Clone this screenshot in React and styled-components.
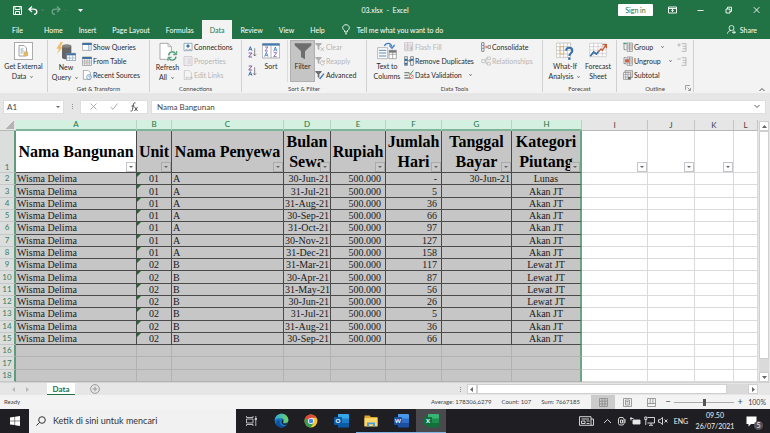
import { useState } from 'react';
import styled, { createGlobalStyle, css } from 'styled-components';

const GlobalStyle = createGlobalStyle`
  * {
    box-sizing: border-box;
  }

  html, body, #root {
    height: 100%;
    margin: 0;
  }

  body {
    font-family: Lato, "Open Sans", sans-serif;
    font-size: 7px;
    line-height: 10px;
    color: #2b2b2b;
    overflow: hidden;
  }

  button, input {
    font: inherit;
    color: inherit;
    margin: 0;
    padding: 0;
    border: 0;
    background: none;
  }

  svg {
    display: block;
    flex: none;
  }
`;

const Window = styled.div`
  display: flex;
  flex-direction: column;
  height: 100vh;
  background: #e6e6e6;
`;

/* ---------- title bar ---------- */

const TitleBar = styled.header`
  display: grid;
  grid-template-columns: 1fr auto 1fr;
  align-items: center;
  flex: none;
  height: 20px;
  background: #217346;
  color: #fff;
`;

const QuickAccess = styled.div`
  display: flex;
  align-items: center;
  gap: 5px;
  padding-left: 11px;
`;

const IconButton = styled.button`
  display: flex;
  align-items: center;
  justify-content: center;
  width: ${props => props.$width || 12}px;
  height: 12px;
  opacity: ${props => (props.$dim ? 0.35 : 1)};
`;

const DocTitle = styled.h1`
  margin: 0;
  font-size: 7px;
  font-weight: 400;
  white-space: pre;
`;

const WindowControls = styled.div`
  display: flex;
  align-items: center;
  justify-content: flex-end;
`;

const SignIn = styled.button`
  width: 35px;
  height: 12px;
  margin-right: 5px;
  border-radius: 1px;
  background: #fff;
  color: #217346;
`;

/* ---------- tabs ---------- */

const TabRow = styled.nav`
  display: flex;
  align-items: stretch;
  flex: none;
  height: 19px;
  padding: 0 13px 0 4px;
  background: #217346;
  color: #fff;
`;

const Tab = styled.button`
  padding: 0 8px;
  white-space: nowrap;
  color: ${props => (props.$active ? '#217346' : '#fff')};
  background: ${props => (props.$active ? '#f3f3f3' : 'transparent')};

  &:first-child {
    margin-right: 5px;
  }
`;

const TellMe = styled.button`
  display: flex;
  align-items: center;
  gap: 7px;
  margin-left: 9px;
  white-space: nowrap;
`;

const Share = styled.button`
  display: flex;
  align-items: center;
  gap: 4px;
  margin-left: auto;
`;

/* ---------- ribbon ---------- */

const Ribbon = styled.section`
  position: relative;
  display: flex;
  flex: none;
  height: 54px;
  padding-top: 1px;
  background: #f3f3f3;
`;

const Group = styled.div`
  position: relative;
  display: flex;
  flex-direction: column;
  width: ${props => props.$width}px;
  margin-bottom: 1px;
  border-right: 1px solid #d0d0d0;
`;

const GroupBody = styled.div`
  display: flex;
  flex: 1;
  padding-left: ${props => props.$pad || 0}px;
`;

const GroupLabel = styled.div`
  height: 7px;
  font-size: 6px;
  line-height: 7px;
  text-align: center;
  color: #444;
`;

const BigButton = styled.button`
  display: flex;
  flex-direction: column;
  align-items: center;
  gap: 1px;
  width: ${props => props.$width || 34}px;
  height: 42px;
  padding-top: 2px;
  white-space: nowrap;
  background: ${props => (props.$pressed ? '#c5c5c5' : 'none')};
  ${props => props.$pressed && css`box-shadow: inset 0 0 0 1px #b0b0b0;`}
`;

const Framed = styled.span`
  display: flex;
  align-items: center;
  justify-content: center;
  width: 19px;
  height: 18px;
  border: 1px solid #ababab;
  background: #fff;
`;

const SmallColumn = styled.div`
  display: flex;
  flex-direction: column;
  width: ${props => props.$width || 'auto'};
`;

const SmallButton = styled.button`
  display: flex;
  align-items: center;
  gap: 1px;
  height: 14px;
  white-space: nowrap;
  color: ${props => (props.$off ? '#b5b5b5' : '#2b2b2b')};

  > svg:first-child {
    opacity: ${props => (props.$off ? 0.5 : 1)};
  }
`;

const Caret = styled.span`
  display: inline-block;
  width: 3px;
  height: 3px;
  margin: 0 2px 1px ${props => props.$gap || 4}px;
  border-right: 1px solid #777;
  border-bottom: 1px solid #777;
  transform: rotate(45deg) scale(0.7);
`;

const InnerRule = styled.div`
  width: 1px;
  height: 42px;
  margin: 0 2px;
  background: #dcdcdc;
`;

const SortStack = styled.div`
  display: flex;
  flex-direction: column;
  gap: 7px;
  padding-top: 6px;
`;

const CornerButton = styled.button`
  position: absolute;
  right: ${props => props.$right}px;
  bottom: 1px;
`;

/* ---------- formula bar ---------- */

const FormulaBar = styled.div`
  display: flex;
  align-items: center;
  flex: none;
  height: 27px;
  padding: 0 4px 0 3px;
`;

const Field = styled.div`
  display: flex;
  align-items: center;
  justify-content: space-between;
  flex: ${props => (props.$grow ? 1 : 'none')};
  width: ${props => props.$width || 0}px;
  height: 14px;
  margin-left: ${props => (props.$grow ? 3 : 0)}px;
  padding: 0 ${props => props.$pad || 4}px;
  background: #fff;
  border: 1px solid #dedede;

  input {
    flex: 1;
    min-width: 0;
    height: 12px;
    outline: 0;
    font-size: 8px;
    color: #444;
  }
`;

const Dots = styled.div`
  display: flex;
  flex-direction: column;
  align-items: center;
  gap: 1px;
  width: ${props => props.$width || 16}px;

  &::before, &::after, i {
    content: "";
    width: 1px;
    height: 1px;
    background: #909090;
  }
`;

/* ---------- sheet ---------- */

const SheetArea = styled.main`
  display: flex;
  flex: 1;
  min-height: 0;
`;

const GridHolder = styled.div`
  flex: 1;
  min-width: 0;
  background: #fff;
`;

const Grid = styled.table`
  width: 100%;
  height: 100%;
  table-layout: fixed;
  border-collapse: separate;
  border-spacing: 0;
  font-family: "Liberation Serif", serif;
  font-size: 10px;
  line-height: 11px;
  color: #1a1a1a;

  td, th {
    padding: 0;
    white-space: nowrap;
    overflow: hidden;
  }
`;

const ColHead = styled.th`
  height: 11px;
  font-family: Lato, sans-serif;
  font-size: 8px;
  line-height: 9px;
  font-weight: 400;
  color: ${props => (props.$selected ? '#217346' : '#444')};
  background: ${props => (props.$selected ? '#d3f0e0' : '#e6e6e6')};
  border-right: 1px solid ${props => (props.$selected ? '#b4d6c3' : '#c4c4c4')};
  border-bottom: ${props => (props.$selected ? '2px solid #7fb498' : '1px solid #b8b8b8')};
`;

const Corner = styled.th`
  background: linear-gradient(135deg, transparent 50%, #b4b4b4 50%) right 2px bottom 1px / 9px 9px no-repeat #e6e6e6;
  border-bottom: 1px solid #b8b8b8;
`;

const RowHead = styled.th`
  font-family: Lato, sans-serif;
  font-size: 8px;
  line-height: 9px;
  font-weight: 400;
  vertical-align: ${props => (props.$tall ? 'bottom' : 'middle')};
  color: #3c7d5a;
  background: #dcdedd;
  border-right: 2px solid #5f9c7c;
  border-bottom: 1px solid #c4c8c6;
`;

const Cell = styled.td`
  position: relative;
  height: 12px;
  text-align: ${props => props.$align || 'left'};
  background: ${props => (props.$selected ? '#c6c6c6' : '#fff')};
  border-right: 1px solid ${props => (!props.$selected ? '#dadada' : props.$lined ? '#4a4a4a' : '#b2b2b2')};
  border-bottom: 1px solid ${props => (!props.$selected ? '#dadada' : props.$lined ? '#4a4a4a' : '#b2b2b2')};

  && {
    padding: 0 ${props => props.$right || 1}px 0 1px;
  }

  ${props => props.$edge && css`border-right: 2px solid #6ba587;`}

  ${props => props.$flag && css`
    &::before {
      content: "";
      position: absolute;
      top: 0;
      left: 0;
      border-top: 4px solid #1d6b25;
      border-right: 4px solid transparent;
    }
  `}
`;

const TitleCell = styled(Cell)`
  height: 40px;
  font-size: 16px;
  line-height: 20px;
  font-weight: 700;
  color: #000;
  background: ${props => (props.$first || !props.$selected ? '#fff' : '#c6c6c6')};

  && {
    padding: 0;
    white-space: pre;
  }
`;

const FilterButton = styled.button`
  position: absolute;
  right: 0;
  bottom: 0;
  display: flex;
  align-items: center;
  justify-content: center;
  width: 10px;
  height: 10px;
  border: 1px solid ${props => (props.$selected ? '#a9abad' : '#c3c7cc')};
  background: ${props => (props.$selected ? '#c9c9c9' : '#fcfcfd')};
`;

const Down = styled.span`
  border: 2px solid transparent;
  border-top-color: #666;
  border-bottom: 0;
`;

const ScrollColumn = styled.div`
  display: flex;
  flex-direction: column;
  align-items: center;
  width: 12px;
  padding-top: 1px;
`;

const ScrollEnd = styled.button`
  display: flex;
  align-items: center;
  justify-content: center;
  flex: none;
  width: 10px;
  height: 10px;
  background: #fff;
  border: 1px solid #cfcfcf;
`;

const VTrack = styled.div`
  flex: 1;
  width: 10px;
  padding-bottom: 13px;
  background: #dadada;

  div {
    height: 100%;
    background: #fff;
    border: 1px solid #cfcfcf;
  }
`;

const SheetTabs = styled.div`
  display: flex;
  align-items: center;
  flex: none;
  height: 13px;
  padding-right: 12px;
  border-top: 1px solid #d4d4d4;
`;

const TabArrows = styled.div`
  display: flex;
  gap: 9px;
  width: 47px;
  padding-left: 11px;
`;

const SheetTab = styled.button`
  align-self: stretch;
  width: 28px;
  font-size: 8px;
  font-weight: 700;
  color: #217346;
  background: #fff;
  border-bottom: 1px solid #217346;
`;

const HScroll = styled.div`
  display: flex;
  align-items: center;
  width: 40%;
  margin-left: auto;
`;

const HTrack = styled.div`
  flex: 1;
  height: 10px;
  padding-right: 21px;
  background: #dadada;

  div {
    height: 100%;
    background: #fff;
    border: 1px solid #cfcfcf;
  }
`;

/* ---------- status bar ---------- */

const StatusBar = styled.footer`
  display: flex;
  align-items: center;
  flex: none;
  height: 14px;
  padding: 0 4px;
  background: #f3f3f3;
  font-size: 6px;
  color: #444;
`;

const Totals = styled.div`
  display: flex;
  gap: 10px;
  margin: 0 11px 0 auto;
  white-space: nowrap;
`;

const ViewButton = styled.button`
  display: flex;
  align-items: center;
  justify-content: center;
  width: 24px;
  height: 14px;
  background: ${props => (props.$active ? '#cbcbcb' : 'none')};
`;

const Zoom = styled.label`
  display: flex;
  align-items: center;
  gap: 2px;
  margin-left: 1px;

  button {
    width: 8px;
    height: 12px;
    font-size: 9px;
  }
`;

const ZoomRange = styled.input`
  appearance: none;
  width: 60px;
  height: 8px;
  background: linear-gradient(#aaa, #aaa) center / 100% 1px no-repeat;

  &::-webkit-slider-thumb {
    appearance: none;
    width: 3px;
    height: 7px;
    background: #555;
  }
`;

const ZoomValue = styled.span`
  width: 20px;
  font-size: 7px;
  text-align: right;
`;

/* ---------- taskbar ---------- */

const Taskbar = styled.div`
  display: flex;
  align-items: stretch;
  flex: none;
  height: 24px;
  background: #1f1e22;
  color: #f2f2f2;
`;

const TaskButton = styled.button`
  display: flex;
  align-items: center;
  justify-content: center;
  width: ${props => props.$width || 30}px;
  background: ${props => (props.$active ? '#4a4a4e' : 'none')};
  border-bottom: 1px solid ${props => (props.$open ? '#7fb6e6' : 'transparent')};
`;

const SearchBox = styled.label`
  display: flex;
  align-items: center;
  gap: 7px;
  width: 207px;
  padding-left: 7px;
  background: #f1f1f1;

  input {
    flex: 1;
    min-width: 0;
    outline: 0;
    font-size: 9px;
  }

  input::placeholder {
    color: #333;
    opacity: 1;
  }
`;

const Tray = styled.div`
  display: flex;
  align-items: center;
  margin-left: auto;
  padding-right: 5px;
`;

const TrayButton = styled.button`
  display: flex;
  align-items: center;
  justify-content: center;
  width: ${props => props.$width || 14}px;
  height: 24px;
`;

const Clock = styled.time`
  width: 46px;
  font-size: 7px;
  line-height: 11px;
  text-align: center;
`;

const Notice = styled(TrayButton)`
  position: relative;

  span {
    position: absolute;
    right: 2px;
    bottom: 3px;
    width: 9px;
    height: 9px;
    border-radius: 50%;
    background: #55555a;
    line-height: 9px;
  }
`;

/* ---------- icons ---------- */

const SaveIcon = () => (
  <svg width="9" height="9" viewBox="0 0 9 9" fill="none" stroke="#fff">
    <path d="M.5.5h8v8h-8zM2 .5v3h5v-3M2.5 8.5v-3h4v3" />
  </svg>
);

const UndoIcon = ({ flip }) => (
  <svg width="10" height="9" viewBox="0 0 10 9" fill="none" stroke="#fff" strokeWidth="1.3">
    <path transform={flip ? 'translate(10 0) scale(-1 1)' : undefined} d="M4 .5 1 3.2 4 6M1 3.2h4.5c2.200 0 3.300 1.200 3.300 2.600S7.700 8.300 6 8.300" />
  </svg>
);

const BulbIcon = () => (
  <svg width="8" height="11" viewBox="0 0 8 11" fill="none" stroke="#fff" strokeWidth=".9">
    <path d="M2.700 8V6.700C1.500 6 .7 5 .7 3.800.7 2 2.200.7 4 .7s3.300 1.300 3.300 3.100c0 1.200-.8 2.200-2 2.900V8zM3 9.800h2" />
  </svg>
);

const ShareIcon = () => (
  <svg width="9" height="9" viewBox="0 0 9 9" fill="none" stroke="#fff" strokeWidth=".8">
    <circle cx="4.500" cy="3" r="2.500" />
    <path d="M.5 8.700C.8 6.600 2.200 5.500 4 5.500M5 7.300h4M7 5.300v3.700" />
  </svg>
);

const WinIcon = ({ kind }) => (
  <svg width="9" height="8" viewBox="0 0 9 8" fill="none" stroke="#fff" strokeWidth=".9">
    {kind === 'ribbon' && <path d="M.5 1h8v6h-8zM.5 2.500h8M4.500 6V3.500M3.200 4.700l1.300-1.200 1.300 1.200" />}
    {kind === 'min' && <path d="M1.500 4.500h6" />}
    {kind === 'restore' && <path d="M2 3h4v4H2zM3.500 3V1.200h4V5.500H6" />}
    {kind === 'close' && <path d="M1.800 1.200l5.600 5.600M7.400 1.200 1.800 6.800" />}
  </svg>
);

const ExternalIcon = () => (
  <svg width="11" height="12" viewBox="0 0 11 12">
    <path d="M1 .5h5l2.500 2.500v8H1z" fill="#fff" stroke="#8a8a8a" strokeWidth=".8" />
    <path d="M2.500 4h3M2.500 6h3M2.500 8h2" stroke="#6d8fb5" strokeWidth=".8" />
    <path d="M5.500 6.500h4.500v4.500H5.500z" fill="#e3b567" />
  </svg>
);

const QueryIcon = () => (
  <svg width="20" height="19" viewBox="0 0 60 57">
    <path d="M18 12v36c4 5 24 5 28 0V12z" fill="#666" />
    <ellipse cx="32" cy="12" rx="14" ry="5" fill="#858585" />
    <path d="M14 0 1 20h8L3 36l18-22h-8l8-14z" fill="#edbd6b" />
    <path d="M32 34h27v22H32z" fill="#fff" stroke="#5d7896" strokeWidth="2" />
    <path d="M32 34h27v6H32z" fill="#41729f" />
    <path d="M32 48h27M41 40v16M50 40v16" stroke="#8aa5bf" strokeWidth="2" />
  </svg>
);

const RefreshIcon = () => (
  <svg width="20" height="19" viewBox="0 0 60 57" fill="none">
    <path d="M6 4h24l10 10v38H6z" fill="#fff" stroke="#9a9a9a" strokeWidth="2.500" />
    <path d="M30 4v10h10" stroke="#9a9a9a" strokeWidth="2" />
    <circle cx="43" cy="42" r="15" fill="#f3f3f3" />
    <path d="M32 40c1-13 17-14 21-4M54 44c-1 12-17 14-21 4" stroke="#4b9a76" strokeWidth="4" />
    <path d="M56 27v11H45M30 57V46h11" stroke="#4b9a76" strokeWidth="3" />
  </svg>
);

const SheetIcon = ({ kind }) => (
  <svg width="10" height="10" viewBox="0 0 30 30" fill="none" strokeWidth="2">
    {kind === 'show' && (
      <>
        <path d="M1 3h28v22H1z" fill="#fff" stroke="#858585" />
        <path d="M1 3h28v6H1z" fill="#3f6f9f" />
        <path d="M20 9v16" stroke="#4b81b5" />
        <path d="M20 10h8v14h-8z" fill="#cfe0f0" />
      </>
    )}
    {kind === 'table' && (
      <>
        <path d="M1 3h28v25H1z" fill="#fff" stroke="#7a7a7a" />
        <path d="M1 3h28v6H1z" fill="#3f6f9f" />
        <path d="M1 15h28M1 21h28M8 9v19M15 9v19M22 9v19" stroke="#999" />
      </>
    )}
    {kind === 'recent' && (
      <>
        <path d="M4 1h14l7 7v20H4z" fill="#fff" stroke="#888" />
        <circle cx="21" cy="21" r="7" fill="#fff" stroke="#4b81b5" />
        <path d="M21 17v4h4" stroke="#4b81b5" />
      </>
    )}
    {kind === 'connections' && (
      <>
        <path d="M3 4h24v22H3z" fill="#fff" stroke="#6a89aa" />
        <path d="M15 7v10M10 12h10" stroke="#2c6db0" strokeWidth="4" />
        <path d="M8 22h6M17 22h7" stroke="#777" />
      </>
    )}
    {kind === 'props' && (
      <>
        <path d="M3 2h24v26H3z" fill="#f7f3f8" stroke="#8b7595" />
        <path d="M7 9h3M7 15h3M7 21h3M13 9h11M13 15h11M13 21h11" stroke="#806f8a" />
      </>
    )}
    {kind === 'links' && (
      <>
        <path d="M4 1h14l7 7v20H4z" fill="#f6f6f6" stroke="#888" />
        <path d="M11 23h6M19 23h8M11 20v6M27 20v6" stroke="#777" />
      </>
    )}
    {kind === 'flash' && (
      <>
        <path d="M2 2h24v24H2z" fill="#f4f0f4" stroke="#907c90" />
        <path d="M2 9h24M2 15h24M2 21h14M11 2v22" stroke="#907c90" />
        <path d="M22 13l-6 9h5l-3 7 9-10h-5l3-6z" fill="#997a85" />
      </>
    )}
    {kind === 'dupes' && (
      <>
        <path d="M2 2h8v26H2zM20 2h8v26h-8z" fill="#fff" stroke="#555" />
        <path d="M2 8h8v7H2zM20 8h8v6h-8zM2 20h8v6H2z" fill="#2f6ead" />
        <path d="M10 14h9M16 10l4 4-4 4" stroke="#444" />
      </>
    )}
    {kind === 'valid' && (
      <>
        <path d="M1 8h15M1 16h12M1 24h22" stroke="#888" strokeWidth="4" />
        <path d="M14 9l4 5L28 1" stroke="#3d9a6a" strokeWidth="3" />
        <circle cx="22" cy="20" r="6" fill="#fff" stroke="#d2533b" />
        <path d="M18 24l8-8" stroke="#d2533b" />
      </>
    )}
    {kind === 'consolidate' && (
      <>
        <path d="M2 2h7v26H2z" fill="#fff" stroke="#555" />
        <path d="M2 10h7M2 19h7" stroke="#2f6ead" />
        <path d="M10 15h9M15 11l4 4-4 4" stroke="#c7502e" />
        <path d="M21 11h8v8h-8z" fill="#fff" stroke="#555" />
      </>
    )}
    {kind === 'relations' && <path d="M2 11h10v9H2zM19 3h9v8h-9zM19 19h9v8h-9zM12 15h3V7h4M15 15v8h4" stroke="#777" />}
    {(kind === 'group' || kind === 'ungroup') && (
      <>
        <path d="M12 3h16v25H12zM12 9h16M12 15h16M12 21h16M20 3v25" fill="#fff" stroke="#777" />
        <path d="M9 5H3v18h6" stroke="#666" />
        {kind === 'group'
          ? <path d="M1 2h10v4H1z" fill="#4d9a76" />
          : <path d="M6 10h12v9H6z" fill="#d0624c" />}
      </>
    )}
    {kind === 'subtotal' && (
      <>
        <path d="M6 2h23v20H6z" fill="#ddd" stroke="#777" />
        <path d="M1 8h22v20H1z" fill="#fff" stroke="#777" />
        <path d="M1 14h22M1 21h22M8 8v20M15 8v20" stroke="#888" />
        <path d="M15 21h8v7h-8z" fill="#6d6d6d" />
      </>
    )}
  </svg>
);

// A over Z, or the other way round, with the arrow beside it
const SortIcon = ({ reverse }) => (
  <svg width="9" height="12" viewBox="0 0 27 36" fill="none" strokeWidth="3">
    <path transform={reverse ? 'translate(0 18)' : undefined} d="M2 14 7 2l5 12M4 10h6" stroke="#3f78b5" />
    <path transform={reverse ? 'translate(0 -18)' : undefined} d="M2 21h10L2 33h10" stroke="#8a5aa0" />
    <path d="M20 7v23M15.500 25l4.500 5 4.500-5" stroke="#555" strokeWidth="2" />
  </svg>
);

const SortBigIcon = () => (
  <svg width="18" height="18" viewBox="0 0 54 54" fill="none" strokeWidth="2.500">
    <path d="M1 6h52v42H1z" fill="#fff" stroke="#8c8c8c" strokeWidth="2" />
    <path d="M1 4h52v7H1z" fill="#4679ac" />
    <path d="M27 11v37" stroke="#8c8c8c" strokeWidth="2" />
    <path d="M9 15h9L9 27h9M35 32h9L35 44h9" stroke="#8a5aa0" />
    <path d="M8 44l5-13 5 13M10 40h6M35 28l5-13 5 13M37 24h6" stroke="#3f78b5" />
  </svg>
);

const FilterBigIcon = () => (
  <svg width="18" height="18" viewBox="0 0 54 54">
    <path d="M2 4h50v6L33 28v24l-12-7V28L2 10z" fill="#6e6e6e" />
  </svg>
);

const FilterSmallIcon = ({ kind }) => (
  <svg width="10" height="10" viewBox="0 0 30 30" fill="none" strokeWidth="2.500">
    <path d="M1 3h19v3l-7 7v12l-5-4v-8L1 6z" fill="#6e6e6e" />
    {kind === 'clear' && <path d="M17 16l10 11M27 16 17 27" stroke="#777" />}
    {kind === 'reapply' && <path d="M26 16c-6-5-13 1-9 8 3 5 11 3 11-3M28 12v6h-6" stroke="#777" />}
    {kind === 'advanced' && <path d="M14 27 27 11" stroke="#3b76b5" strokeWidth="4" />}
  </svg>
);

const ColumnsIcon = () => (
  <svg width="20" height="18" viewBox="0 0 60 54" fill="none" strokeWidth="2">
    <path d="M2 17h30v33H2z" fill="#fff" stroke="#999" />
    <path d="M6 25h22M6 33h22M6 42h22" stroke="#5a87b5" strokeWidth="3" />
    <path d="M36 25h22v25H36zM36 37h22M47 25v25" fill="#fff" stroke="#888" />
    <path d="M36 25h22v7H36z" fill="#777" />
    <path d="M22 12C27 1 41 1 45 14" stroke="#3f7ec0" strokeWidth="4" />
    <path d="M37 10l8 9 8-10" stroke="#3f7ec0" strokeWidth="4" />
  </svg>
);

const WhatIfIcon = () => (
  <svg width="18" height="18" viewBox="0 0 54 54" fill="none">
    <path d="M1 3h43v43H1zM1 14h43M1 25h43M1 36h43M12 3v43M23 3v43M34 3v43" fill="#fff" stroke="#b9b3ac" strokeWidth="2" />
    <path d="M12 14h11v22H12z" stroke="#e2a763" strokeWidth="2" />
    <path d="M30 26c1-12 19-12 19 0 0 8-9 8-9 16" stroke="#386fae" strokeWidth="6" />
    <circle cx="40" cy="50" r="4" fill="#386fae" />
  </svg>
);

const ForecastIcon = () => (
  <svg width="18" height="18" viewBox="0 0 54 54" fill="none">
    <path d="M2 4h50v40H2zM2 14h50M2 24h50M2 34h50M14 4v40M27 4v40M40 4v40" fill="#fff" stroke="#c3c3c3" strokeWidth="2" />
    <path d="M4 43 14 30l8 6 8-9" stroke="#3a6ea5" strokeWidth="5" />
    <path d="M29 29l7-8 4 4L51 9M41 8h11v11" stroke="#cf5a36" strokeWidth="4" />
  </svg>
);

const DetailIcon = ({ minus }) => (
  <svg width="10" height="9" viewBox="0 0 30 27" fill="none" stroke="#b0b0b0" strokeWidth="2.500">
    <path d={minus ? 'M1 6h10' : 'M1 6h10M6 1v10'} />
    <path d="M14 2h13v23H14M17 10h10M17 17h10" />
  </svg>
);

const ViewIcon = ({ kind }) => (
  <svg width="9" height="9" viewBox="0 0 9 9" fill="none" stroke="#888" strokeWidth=".8">
    <path d="M.5.5h8v8h-8z" />
    {kind === 'normal' && <path d="M.5 3.200h8M.5 5.900h8M3.200.5v8M5.900.5v8" />}
    {kind === 'layout' && <path d="M2.500 2h4v5h-4zM3.500 3.500h2M3.500 5h2" />}
    {kind === 'break' && <path d="M.5 5.500h8M3.200 .5v5M5.900.5v5" />}
  </svg>
);

const StartIcon = () => (
  <svg width="10" height="10" viewBox="0 0 10 10" fill="#fff">
    <path d="M0 1.400 4.600.8v3.900H0zM5.100.7 10 0v4.700H5.100zM0 5.200h4.600v3.900L0 8.500zM5.100 5.200H10v4.700l-4.900-.7z" />
  </svg>
);

const SearchIcon = () => (
  <svg width="10" height="10" viewBox="0 0 10 10" fill="none" stroke="#333">
    <circle cx="6" cy="4" r="3.300" />
    <path d="M3.600 6.400.4 9.600" />
  </svg>
);

const TaskViewIcon = () => (
  <svg width="11" height="10" viewBox="0 0 11 10" fill="none" stroke="#ddd" strokeWidth=".8">
    <path d="M.5 0v1.500h6.500V0M.5 3h6.500v4H.5zM.5 10V8.500h6.500V10M9.800 0v1.500M9.800 4v6" />
    <path d="M9.100 2.200h1.400v1.400H9.100z" fill="#fff" />
  </svg>
);

const EdgeIcon = () => (
  <svg width="15" height="15" viewBox="0 0 48 48">
    <defs>
      <linearGradient id="edgeTop" x1="0" x2="1"><stop stopColor="#2fa5e0" /><stop offset="1" stopColor="#6cd45d" /></linearGradient>
    </defs>
    <circle cx="24" cy="24" r="22" fill="#1673c4" />
    <path d="M2 22C5-3 41-5 46 20c1 10-8 14-17 11 4-5 3-13-5-14-9-1-19 1-22 5z" fill="url(#edgeTop)" />
    <path d="M18 23c-3 10 5 20 18 20-10 6-22 3-28-5-3-9 2-16 10-15z" fill="#0e4f9c" />
    <path d="M27 21c4 4 3 8 1 11 6 4 13 2 17-3l-4 8c-10 5-22-4-14-16z" fill="#1f1e22" />
  </svg>
);

const ChromeIcon = () => (
  <svg width="14" height="14" viewBox="0 0 48 48">
    <circle cx="24" cy="24" r="22" fill="#f5c435" />
    <path d="M5 13a22 22 0 0 1 38 0H24L14 30z" fill="#dd4b3b" />
    <path d="M5 13a22 22 0 0 0 18 33l11-17-18 1z" fill="#34a053" />
    <circle cx="24" cy="24" r="10.500" fill="#fff" />
    <circle cx="24" cy="24" r="8" fill="#4384ee" />
  </svg>
);

const OfficeText = styled.text`
  font: 700 6px Lato, sans-serif;
  fill: #fff;
  text-anchor: middle;
`;

const officeColors = {
  O: ['#35a7e8', '#1a7ecb', '#0b5ca8'],
  W: ['#4a96e8', '#2b6fc9', '#1b4fa0'],
  X: ['#34b674', '#1f8f50', '#12703b'],
};

const OfficeIcon = ({ letter }) => {
  const [light, mid, dark] = officeColors[letter];
  return (
    <svg width="15" height="14" viewBox="0 0 15 14">
      <path d="M4 0h10a1 1 0 0 1 1 1v4H4z" fill={light} />
      <path d="M4 4.500h11v5H4z" fill={mid} />
      <path d="M4 9h11v3.500a1 1 0 0 1-1 1H4z" fill={dark} />
      <rect y="3" width="8" height="8" rx="1" fill={dark} />
      <OfficeText x="4" y="9">{letter}</OfficeText>
    </svg>
  );
};

const FolderIcon = () => (
  <svg width="14" height="12" viewBox="0 0 14 12">
    <path d="M.5.5h5l1.500 1.500h6.500V11H.5z" fill="#e0a52f" />
    <path d="M.5 3h13v8.500H.5z" fill="#fbd76b" />
    <path d="M3 11.500V7.500h8v4H9V9.300H5v2.200z" fill="#4a9bd8" />
  </svg>
);

const TrayIcon = ({ kind }) => (
  <svg width={kind === 'news' ? 15 : 11} height="10" viewBox={kind === 'news' ? '0 0 15 10' : '0 0 11 10'} fill="none" stroke="#e8e8e8" strokeWidth=".9">
    {kind === 'news' && <path d="M.5.7h11.500v8.600H.5zM12 3h2.500v6.300H12M2.500 3h7.500M2.500 5h3.500v2.500H2.500zM7.500 5h3M7.500 7.500h3" />}
    {kind === 'up' && <path d="M2 7l3.500-3.500L9 7" />}
    {kind === 'phone' && <path d="M3.500 1.500h3.500l1 1.500v4.500l-1 1.500H3.500l-1-1.500V3zM4.500 4h2v3h-2zM9 3v4" />}
    {kind === 'battery' && <path d="M3 4h7v4H3zM0 2.500h3.500M1 1v3.500" fill="#e8e8e8" />}
    {kind === 'network' && <path d="M3.500 1.500h7v5.500h-7M7 7v2M5 9.300h4M.8 1h2v2.500h-2zM1.800 3.500v5.500" />}
    {kind === 'mute' && <path d="M.5 3.700h1.500L4.500 1.500v7L2 6.300H.5zM6.500 3.500l3 3M9.500 3.500l-3 3" />}
  </svg>
);

const Chevron = ({ direction, color = '#555' }) => (
  <svg width="6" height="5" viewBox="0 0 6 5" fill="none" stroke={color}>
    <path d={direction === 'up' ? 'M.5 4 3 1.500 5.500 4' : 'M.5 1 3 3.500 5.500 1'} />
  </svg>
);

const Arrow = ({ direction, color = '#666' }) => {
  const shapes = {
    up: 'M0 4 2.500 1 5 4z',
    down: 'M0 1l2.500 3L5 1z',
    left: 'M4 0 1 2.500 4 5z',
    right: 'M1 0l3 2.500L1 5z',
  };
  return (
    <svg width="5" height="5" viewBox="0 0 5 5" fill={color}>
      <path d={shapes[direction]} />
    </svg>
  );
};

/* ---------- data ---------- */

const tabs = ['File', 'Home', 'Insert', 'Page Layout', 'Formulas', 'Data', 'Review', 'View', 'Help'];

const columns = [
  { id: 'A', width: 121, title: 'Nama Bangunan' },
  { id: 'B', width: 35, title: 'Unit', align: 'center' },
  { id: 'C', width: 112, title: 'Nama Penyewa' },
  { id: 'D', width: 47, title: 'Bulan\nSewa', align: 'right' },
  { id: 'E', width: 55, title: 'Rupiah', align: 'right', right: 4 },
  { id: 'F', width: 56, title: 'Jumlah\nHari', align: 'right', right: 4 },
  { id: 'G', width: 70, title: 'Tanggal\nBayar', align: 'right' },
  { id: 'H', width: 70, title: 'Kategori\nPiutang', align: 'center' },
  { id: 'I', width: 66 },
  { id: 'J', width: 47 },
  { id: 'K', width: 39 },
  { id: 'L' },
];

const records = [
  ['01', 'A', '30-Jun-21', '-', '30-Jun-21', 'Lunas'],
  ['01', 'A', '31-Jul-21', '5', '', 'Akan JT'],
  ['01', 'A', '31-Aug-21', '36', '', 'Akan JT'],
  ['01', 'A', '30-Sep-21', '66', '', 'Akan JT'],
  ['01', 'A', '31-Oct-21', '97', '', 'Akan JT'],
  ['01', 'A', '30-Nov-21', '127', '', 'Akan JT'],
  ['01', 'A', '31-Dec-21', '158', '', 'Akan JT'],
  ['02', 'B', '31-Mar-21', '117', '', 'Lewat JT'],
  ['02', 'B', '30-Apr-21', '87', '', 'Lewat JT'],
  ['02', 'B', '31-May-21', '56', '', 'Lewat JT'],
  ['02', 'B', '30-Jun-21', '26', '', 'Lewat JT'],
  ['02', 'B', '31-Jul-21', '5', '', 'Akan JT'],
  ['02', 'B', '31-Aug-21', '36', '', 'Akan JT'],
  ['02', 'B', '30-Sep-21', '66', '', 'Akan JT'],
];

const rows = records.map(([unit, tenant, month, days, paid, status]) => (
  ['Wisma Delima', unit, tenant, month, '500.000', days, paid, status]
));

const App = () => {
  const [activeTab, setActiveTab] = useState('Data');
  const [formula, setFormula] = useState('Nama Bangunan');
  const [zoom, setZoom] = useState(50);

  return (
    <Window>
      <GlobalStyle />

      <TitleBar>
        <QuickAccess>
          <IconButton aria-label="Save"><SaveIcon /></IconButton>
          <IconButton aria-label="Undo" $width={18}><UndoIcon /><Caret $gap={3} /></IconButton>
          <IconButton aria-label="Redo" $width={18} $dim><UndoIcon flip /><Caret $gap={3} /></IconButton>
          <IconButton aria-label="Customize"><Arrow direction="down" color="#fff" /></IconButton>
        </QuickAccess>
        <DocTitle>03.xlsx  -  Excel</DocTitle>
        <WindowControls>
          <SignIn>Sign in</SignIn>
          <IconButton $width={28} aria-label="Ribbon options"><WinIcon kind="ribbon" /></IconButton>
          <IconButton $width={28} aria-label="Minimize"><WinIcon kind="min" /></IconButton>
          <IconButton $width={28} aria-label="Restore"><WinIcon kind="restore" /></IconButton>
          <IconButton $width={28} aria-label="Close"><WinIcon kind="close" /></IconButton>
        </WindowControls>
      </TitleBar>

      <TabRow>
        {tabs.map(tab => (
          <Tab key={tab} $active={tab === activeTab} onClick={() => setActiveTab(tab)}>{tab}</Tab>
        ))}
        <TellMe><BulbIcon />Tell me what you want to do</TellMe>
        <Share><ShareIcon />Share</Share>
      </TabRow>

      <Ribbon>
        <Group $width={48}>
          <GroupBody>
            <BigButton $width={47}>
              <Framed><ExternalIcon /></Framed>
              <span>Get External<br />Data<Caret /></span>
            </BigButton>
          </GroupBody>
        </Group>

        <Group $width={102}>
          <GroupBody $pad={2}>
            <BigButton $width={32}>
              <QueryIcon />
              <span>New<br />Query<Caret /></span>
            </BigButton>
            <SmallColumn>
              <SmallButton><SheetIcon kind="show" />Show Queries</SmallButton>
              <SmallButton><SheetIcon kind="table" />From Table</SmallButton>
              <SmallButton><SheetIcon kind="recent" />Recent Sources</SmallButton>
            </SmallColumn>
          </GroupBody>
          <GroupLabel>Get &amp; Transform</GroupLabel>
        </Group>

        <Group $width={92}>
          <GroupBody $pad={2}>
            <BigButton $width={31}>
              <RefreshIcon />
              <span>Refresh<br />All<Caret /></span>
            </BigButton>
            <SmallColumn>
              <SmallButton><SheetIcon kind="connections" />Connections</SmallButton>
              <SmallButton $off><SheetIcon kind="props" />Properties</SmallButton>
              <SmallButton $off><SheetIcon kind="links" />Edit Links</SmallButton>
            </SmallColumn>
          </GroupBody>
          <GroupLabel>Connections</GroupLabel>
        </Group>

        <Group $width={125}>
          <GroupBody $pad={6}>
            <SortStack>
              <button aria-label="Sort A to Z"><SortIcon /></button>
              <button aria-label="Sort Z to A"><SortIcon reverse /></button>
            </SortStack>
            <BigButton $width={28}><SortBigIcon />Sort</BigButton>
            <InnerRule />
            <BigButton $width={25} $pressed><FilterBigIcon />Filter</BigButton>
            <SmallColumn>
              <SmallButton $off><FilterSmallIcon kind="clear" />Clear</SmallButton>
              <SmallButton $off><FilterSmallIcon kind="reapply" />Reapply</SmallButton>
              <SmallButton><FilterSmallIcon kind="advanced" />Advanced</SmallButton>
            </SmallColumn>
          </GroupBody>
          <GroupLabel>Sort &amp; Filter</GroupLabel>
        </Group>

        <Group $width={176}>
          <GroupBody $pad={3}>
            <BigButton>
              <ColumnsIcon />
              <span>Text to<br />Columns</span>
            </BigButton>
            <SmallColumn $width="77px">
              <SmallButton $off><SheetIcon kind="flash" />Flash Fill</SmallButton>
              <SmallButton><SheetIcon kind="dupes" />Remove Duplicates</SmallButton>
              <SmallButton><SheetIcon kind="valid" />Data Validation<Caret $gap={6} /></SmallButton>
            </SmallColumn>
            <SmallColumn>
              <SmallButton><SheetIcon kind="consolidate" />Consolidate</SmallButton>
              <SmallButton $off><SheetIcon kind="relations" />Relationships</SmallButton>
            </SmallColumn>
          </GroupBody>
          <GroupLabel>Data Tools</GroupLabel>
        </Group>

        <Group $width={74}>
          <GroupBody $pad={4}>
            <BigButton $width={36}>
              <WhatIfIcon />
              <span>What-If<br />Analysis<Caret $gap={3} /></span>
            </BigButton>
            <BigButton $width={30}>
              <ForecastIcon />
              <span>Forecast<br />Sheet</span>
            </BigButton>
          </GroupBody>
          <GroupLabel>Forecast</GroupLabel>
        </Group>

        <Group $width={77}>
          <GroupBody $pad={6}>
            <SmallColumn $width="54px">
              <SmallButton><SheetIcon kind="group" />Group<Caret $gap={7} /></SmallButton>
              <SmallButton><SheetIcon kind="ungroup" />Ungroup<Caret $gap={7} /></SmallButton>
              <SmallButton><SheetIcon kind="subtotal" />Subtotal</SmallButton>
            </SmallColumn>
            <SmallColumn>
              <SmallButton aria-label="Show detail"><DetailIcon /></SmallButton>
              <SmallButton aria-label="Hide detail"><DetailIcon minus /></SmallButton>
            </SmallColumn>
          </GroupBody>
          <GroupLabel>Outline</GroupLabel>
          <CornerButton $right={2} aria-label="Outline settings">
            <svg width="6" height="6" viewBox="0 0 6 6" fill="none" stroke="#888" strokeWidth=".8">
              <path d="M.5 5V.5H5M2.500 2.500l3 3M5.500 3v2.500H3" />
            </svg>
          </CornerButton>
        </Group>
        <CornerButton $right={5} aria-label="Collapse ribbon"><Chevron direction="up" /></CornerButton>
      </Ribbon>

      <FormulaBar>
        <Field $width={61} $pad={3}>
          <input aria-label="Name box" defaultValue="A1" />
          <Down />
        </Field>
        <Dots><i /></Dots>
        <Field $width={68} $pad={9}>
          <svg width="7" height="7" viewBox="0 0 7 7" stroke="#aaa"><path d="M.5.5l6 6M6.500.5l-6 6" /></svg>
          <svg width="8" height="7" viewBox="0 0 8 7" fill="none" stroke="#aaa"><path d="M.5 4 3 6.300 7.500.5" /></svg>
          <svg width="8" height="10" viewBox="0 0 8 10" fill="none" stroke="#444" strokeWidth=".9">
            <path d="M5.500 1C4 .3 3.500 1.500 3.300 3L2.500 7.500C2.300 9 1.500 9.500.5 9M1.500 4h3M4.500 5l3 4M7.500 5l-3 4" />
          </svg>
        </Field>
        <Field $grow $pad={5}>
          <input aria-label="Formula" value={formula} onChange={e => setFormula(e.target.value)} />
          <Chevron direction="down" />
        </Field>
      </FormulaBar>

      <SheetArea>
        <GridHolder>
          <Grid>
            <colgroup>
              <col style={{ width: 16 }} />
              {columns.map(col => <col key={col.id} style={{ width: col.width }} />)}
            </colgroup>
            <tbody>
              <tr>
                <Corner />
                {columns.map(col => <ColHead key={col.id} $selected={!!col.title}>{col.id}</ColHead>)}
              </tr>
              <tr>
                <RowHead $tall>1</RowHead>
                {columns.map(col => (
                  <TitleCell
                    key={col.id}
                    $align="center"
                    $first={col.id === 'A'}
                    $selected={!!col.title}
                    $lined
                    $edge={col.id === 'H'}
                  >
                    {col.title}
                    {col.id !== 'L' && (
                      <FilterButton $selected={!!col.title && col.id !== 'A'} aria-label={`Filter ${col.id}`}>
                        <Down />
                      </FilterButton>
                    )}
                  </TitleCell>
                ))}
              </tr>
              {Array.from({ length: 17 }, (_, r) => (
                <tr key={r}>
                  <RowHead>{r + 2}</RowHead>
                  {columns.map((col, c) => (
                    <Cell
                      key={col.id}
                      $align={col.align}
                      $right={col.right}
                      $selected={!!col.title}
                      $lined={r < rows.length}
                      $flag={col.id === 'B' && r < rows.length}
                      $edge={col.id === 'H'}
                    >
                      {rows[r] && rows[r][c]}
                    </Cell>
                  ))}
                </tr>
              ))}
            </tbody>
          </Grid>
        </GridHolder>
        <ScrollColumn>
          <ScrollEnd aria-label="Scroll up"><Arrow direction="up" /></ScrollEnd>
          <VTrack><div /></VTrack>
          <ScrollEnd aria-label="Scroll down"><Arrow direction="down" /></ScrollEnd>
        </ScrollColumn>
      </SheetArea>

      <SheetTabs>
        <TabArrows>
          <Arrow direction="left" color="#b8b8b8" />
          <Arrow direction="right" color="#b8b8b8" />
        </TabArrows>
        <SheetTab>Data</SheetTab>
        <IconButton $width={40} aria-label="New sheet">
          <svg width="10" height="10" viewBox="0 0 10 10" fill="none" stroke="#888" strokeWidth=".8">
            <circle cx="5" cy="5" r="4.400" />
            <path d="M5 2.700v4.600M2.700 5h4.600" />
          </svg>
        </IconButton>
        <HScroll>
          <Dots $width={12}><i /></Dots>
          <ScrollEnd aria-label="Scroll left"><Arrow direction="left" /></ScrollEnd>
          <HTrack><div /></HTrack>
          <ScrollEnd aria-label="Scroll right"><Arrow direction="right" /></ScrollEnd>
        </HScroll>
      </SheetTabs>

      <StatusBar>
        <span>Ready</span>
        <Totals>
          <span>Average: 178306,6279</span>
          <span>Count: 107</span>
          <span>Sum: 7667185</span>
        </Totals>
        <ViewButton $active aria-label="Normal view"><ViewIcon kind="normal" /></ViewButton>
        <ViewButton aria-label="Page layout view"><ViewIcon kind="layout" /></ViewButton>
        <ViewButton aria-label="Page break view"><ViewIcon kind="break" /></ViewButton>
        <Zoom>
          <button aria-label="Zoom out">−</button>
          <ZoomRange type="range" aria-label="Zoom" value={zoom} onChange={e => setZoom(Number(e.target.value))} />
          <button aria-label="Zoom in">+</button>
          <ZoomValue>100%</ZoomValue>
        </Zoom>
      </StatusBar>

      <Taskbar>
        <TaskButton $width={29} aria-label="Start"><StartIcon /></TaskButton>
        <SearchBox>
          <SearchIcon />
          <input aria-label="Search" placeholder="Ketik di sini untuk mencari" />
        </SearchBox>
        <TaskButton aria-label="Task view"><TaskViewIcon /></TaskButton>
        <TaskButton aria-label="Edge"><EdgeIcon /></TaskButton>
        <TaskButton aria-label="Chrome"><ChromeIcon /></TaskButton>
        <TaskButton aria-label="Outlook"><OfficeIcon letter="O" /></TaskButton>
        <TaskButton aria-label="File Explorer" $open><FolderIcon /></TaskButton>
        <TaskButton aria-label="Word" $open><OfficeIcon letter="W" /></TaskButton>
        <TaskButton aria-label="Excel" $open $active><OfficeIcon letter="X" /></TaskButton>
        <Tray>
          <TrayButton $width={28} aria-label="News"><TrayIcon kind="news" /></TrayButton>
          <TrayButton aria-label="Hidden icons"><TrayIcon kind="up" /></TrayButton>
          <TrayButton aria-label="Phone"><TrayIcon kind="phone" /></TrayButton>
          <TrayButton aria-label="Battery"><TrayIcon kind="battery" /></TrayButton>
          <TrayButton aria-label="Network"><TrayIcon kind="network" /></TrayButton>
          <TrayButton aria-label="Sound"><TrayIcon kind="mute" /></TrayButton>
          <TrayButton $width={22}>ENG</TrayButton>
          <Clock>09.50<br />26/07/2021</Clock>
          <Notice $width={27} aria-label="Notifications">
            <svg width="11" height="11" viewBox="0 0 11 11" fill="#fff"><path d="M.5.5h10v7.500H5L2.500 10.500V8h-2z" /></svg>
            <span>5</span>
          </Notice>
        </Tray>
      </Taskbar>
    </Window>
  );
};

export default App;
